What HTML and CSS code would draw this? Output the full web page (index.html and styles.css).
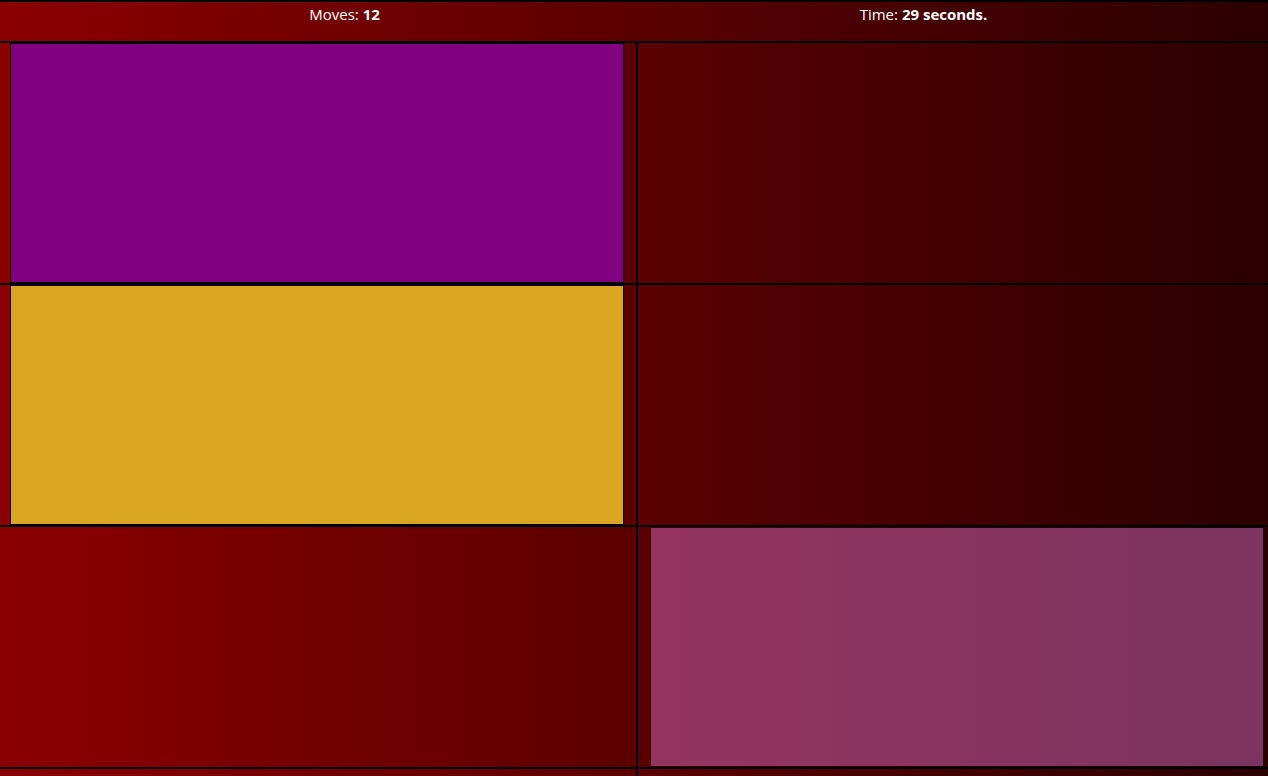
FILE: index.html
```html
<!DOCTYPE html>
<html lang="en">
<head>
  <meta charset="UTF-8">
  <meta name="viewport" content="width=device-width, initial-scale=1">
  <title>Memory</title>
  <link rel="stylesheet" href="styles.css">
</head>
<body>
  <div class="bar">
    <div class="stat">Moves: <b>12</b></div>
    <div class="stat">Time: <b>29 seconds.</b></div>
  </div>

  <div class="board">
    <div class="cell"><div class="card purple"></div></div>
    <div class="cell"></div>
    <div class="cell"><div class="card gold"></div></div>
    <div class="cell"></div>
    <div class="cell"></div>
    <div class="cell"><div class="card violet"></div></div>
    <div class="cell"></div>
    <div class="cell"></div>
  </div>
</body>
</html>
```

FILE: styles.css
```css
html, body {
  margin: 0;
  overflow: hidden;
}
body {
  background: linear-gradient(to right, #8b0000, #2b0000);
  font-family: "Open Sans", sans-serif;
  color: #fff;
  height: 100vh;
}
.bar {
  display: flex;
  height: 39px;
  padding: 0 55px;
  border-top: 2px solid #000;
  border-bottom: 1px solid #000;
  font-size: 15px;
}
.stat {
  flex: 1;
  text-align: center;
  padding-top: 2px;
}
.board {
  display: grid;
  grid-template-columns: 640px 640px;
  grid-auto-rows: 242px;
  width: 1280px;
  margin-left: -3px;
}
.cell {
  border: 1px solid #000;
  display: flex;
  justify-content: center;
}
.card {
  width: 612px;
  border: 1px solid #000;
}
.purple {
  background: purple;
}
.gold {
  background: goldenrod;
}
.violet {
  background: violet;
  opacity: 0.4;
}
```
